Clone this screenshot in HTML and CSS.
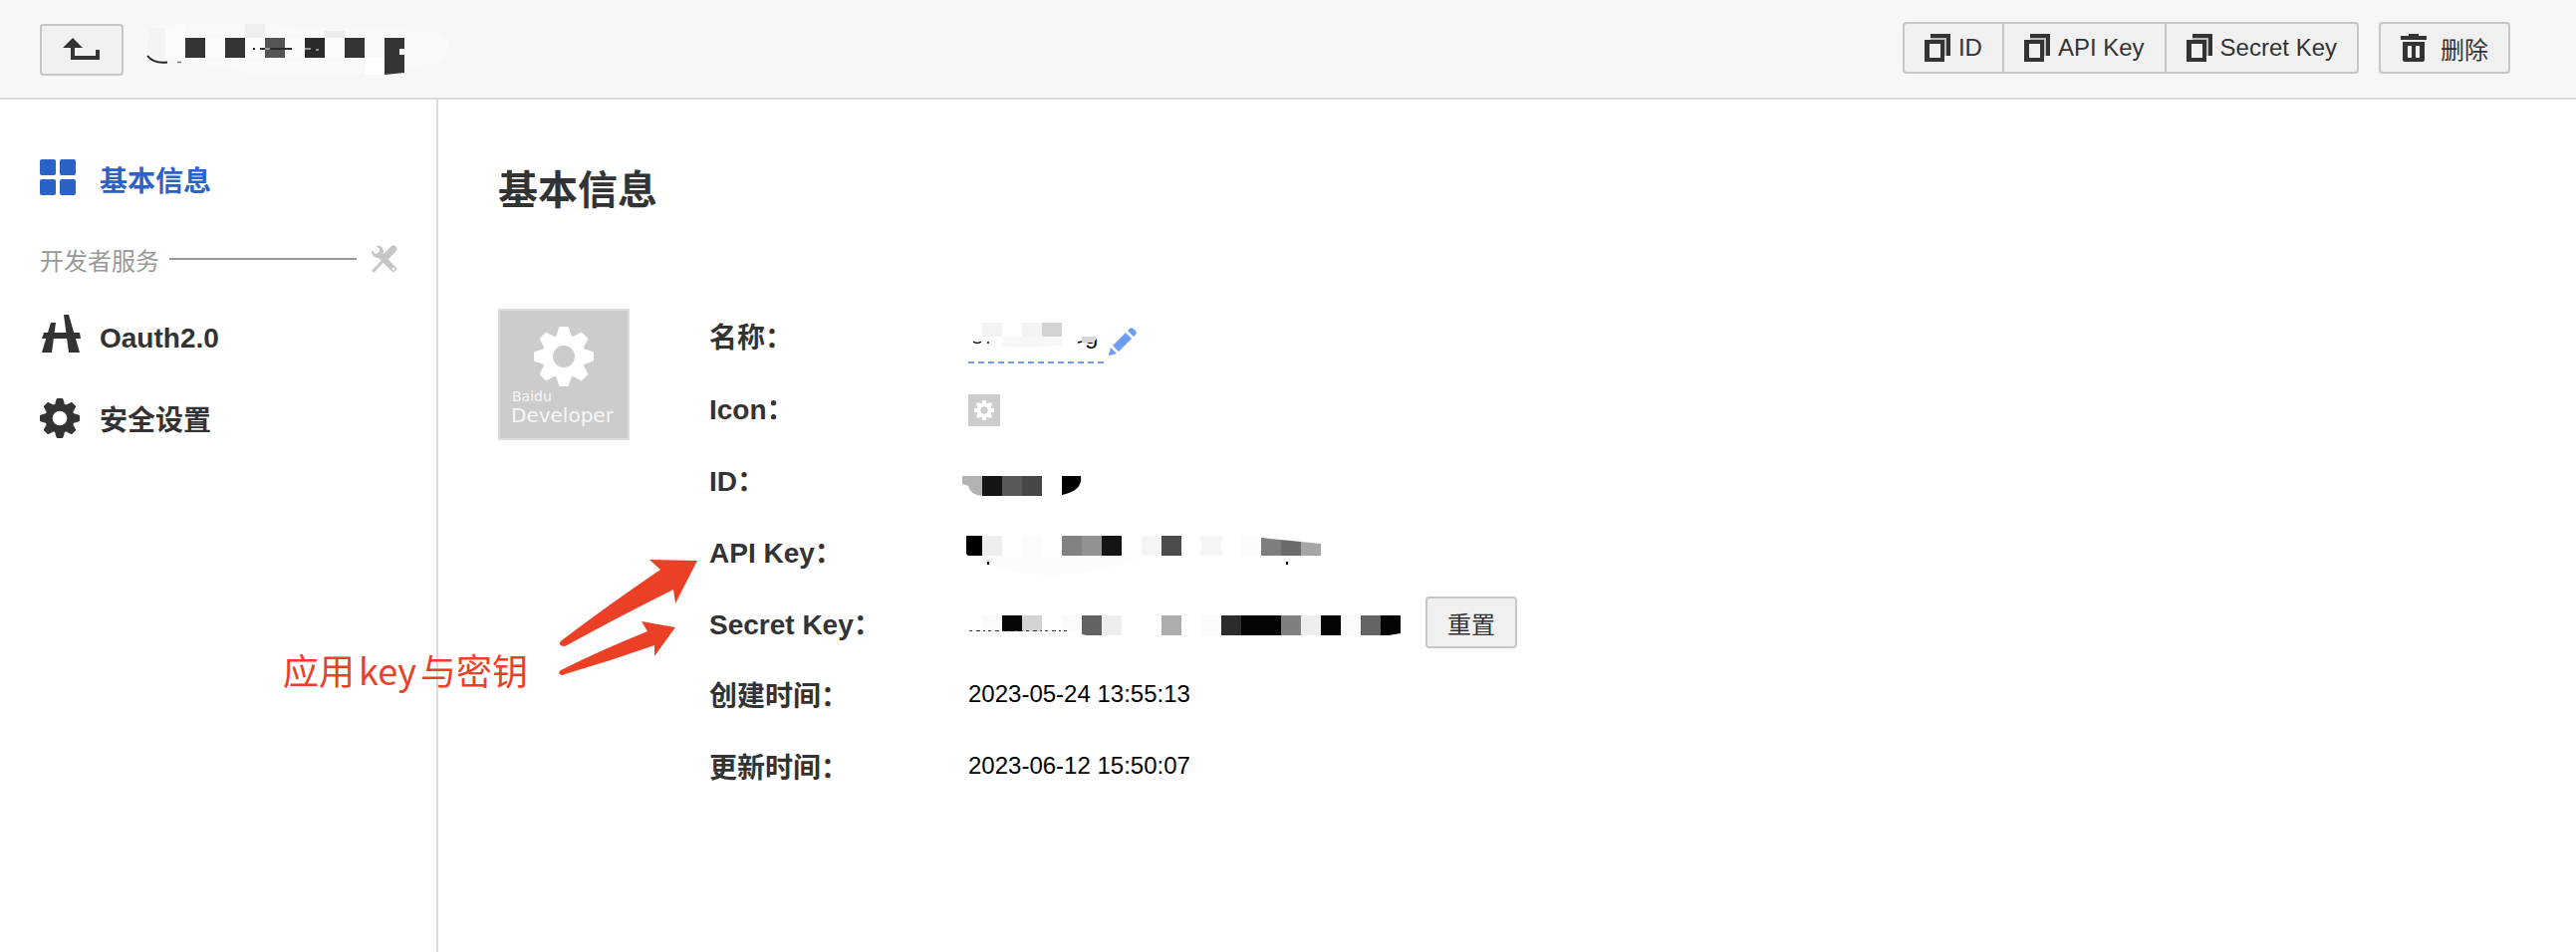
FILE: index.html
```html
<!DOCTYPE html>
<html lang="zh-CN">
<head>
  <meta charset="UTF-8">
  <title>基本信息</title>
  <meta name="viewport" content="width=device-width, initial-scale=1.0">
  <link rel="stylesheet" href="styles.css">
</head>
<body>

  <svg class="sprite" aria-hidden="true">
    <defs>
      <path id="tooth" d="M-8 -19 L-5 -29 Q-4.500 -30 -3.500 -30 H3.500 Q4.500 -30 5 -29 L8 -19 Z"/>
      <symbol id="gear" viewBox="-30 -30 60 60">
        <circle r="16.500" fill="none" stroke="currentColor" stroke-width="11"/>
        <g fill="currentColor">
          <use href="#tooth"/>
          <use href="#tooth" transform="rotate(45)"/>
          <use href="#tooth" transform="rotate(90)"/>
          <use href="#tooth" transform="rotate(135)"/>
          <use href="#tooth" transform="rotate(180)"/>
          <use href="#tooth" transform="rotate(225)"/>
          <use href="#tooth" transform="rotate(270)"/>
          <use href="#tooth" transform="rotate(315)"/>
        </g>
      </symbol>
      <symbol id="copy" viewBox="0 0 28 28">
        <path d="M6 4h16v18h-2V6H6z" fill="#bbb"/>
        <path d="M6 0h20v22h-4V4H6z" fill="#333"/>
        <path d="M0 6h20v22H0zM5 10v14h11V10z" fill="#333" fill-rule="evenodd"/>
      </symbol>
    </defs>
  </svg>

  <header class="header">
    <div class="header-left">
      <button class="btn back" type="button" aria-label="返回">
        <svg width="40" height="24" viewBox="0 0 40 24">
          <path d="M11 0 L21 10 H13 V18 H34 V12 H38 V22 H9 V10 H1 Z" fill="#333"/>
        </svg>
      </button>
      <!-- masked app name -->
      <svg class="mask" width="320" height="60" viewBox="140 20 320 60">
        <path d="M150 28 Q160 22 250 24 L440 32 Q460 45 440 62 L400 72 Q300 80 250 74 Q200 60 150 58 Q142 42 150 28z" fill="#f9f9f9"/>
        <path d="M150 28h16v32q-18-2-19-12z" fill="#f4f4f4"/>
        <path d="M166 25h20v34h-20z" fill="#fbfbfb"/>
        <path d="M246 24h20v14h-20z" fill="#efefef"/>
        <path d="M326 31h20v7h-20z" fill="#ebebeb"/>
        <path d="M206 38h20v20h-20zM246 38h20v20h-20zM286 38h20v20h-20zM326 38h20v20h-20z" fill="#fcfcfc"/>
        <path d="M366 58h20v17h-20z" fill="#fff"/>
        <path d="M186 38h20v20h-20zM226 38h20v20h-20zM346 38h20v20h-20zM386 38h20v11h-5v6h5v18l-20 2z" fill="#343434"/>
        <path d="M266 38h20v20h-20z" fill="#555"/>
        <path d="M306 38h20v20h-20z" fill="#2c2a2a"/>
        <path d="M254 49h2M261 49h32" stroke="#2c2c2c" stroke-width="2"/>
        <path d="M266 49h5M306 49h6M317 50h3" stroke="#fff" stroke-width="1"/>
        <path d="M148 56 Q154 64 168 62.500" fill="none" stroke="#222" stroke-width="2"/>
        <path d="M178 62.500h4" stroke="#777" stroke-width="1.500"/>
      </svg>
    </div>
    <div class="header-right">
      <div class="btn-group">
        <button class="btn" type="button"><svg width="28" height="28"><use href="#copy"/></svg>ID</button>
        <button class="btn" type="button"><svg width="28" height="28"><use href="#copy"/></svg>API Key</button>
        <button class="btn" type="button"><svg width="28" height="28"><use href="#copy"/></svg>Secret Key</button>
      </div>
      <button class="btn btn-delete" type="button">
        <svg width="28" height="28" viewBox="0 0 28 28">
          <path d="M0 2h8V0h10v2h8v4H0z" fill="#333"/>
          <path d="M2 8h22v18q0 2-2 2H4q-2 0-2-2zM7 12v12h4V12zM15 12v12h4V12z" fill="#333" fill-rule="evenodd"/>
        </svg>删除
      </button>
    </div>
  </header>

  <div class="layout">
    <nav class="sidebar">
      <a class="nav-item active" href="#">
        <svg width="40" height="40" viewBox="0 0 40 40" fill="currentColor">
          <rect x="0" y="0" width="16" height="16" rx="2"/>
          <rect x="20" y="0" width="16" height="16" rx="2"/>
          <rect x="0" y="20" width="16" height="16" rx="2"/>
          <rect x="20" y="20" width="16" height="16" rx="2"/>
        </svg>
        基本信息
      </a>
      <div class="nav-group">
        <span>开发者服务</span>
        <i class="rule"></i>
        <svg width="28" height="28" viewBox="0 0 28 28">
          <path d="M3 26 L18 10" stroke="#c6c6c6" stroke-width="3" stroke-linecap="round"/>
          <path d="M16 11 L23 4" stroke="#c6c6c6" stroke-width="7" stroke-linecap="round"/>
          <path d="M9 10 L23 24" stroke="#c6c6c6" stroke-width="6" stroke-linecap="round"/>
          <path d="M1 5 L5 9 L9 8 L9 4 L6 1 Q12 0 13 6 Q13 12 8 13 Q1 13 1 5z" fill="#c6c6c6"/>
          <circle cx="23" cy="24" r="1.500" fill="#fff"/>
        </svg>
      </div>
      <a class="nav-item" href="#">
        <svg width="40" height="40" viewBox="0 0 40 40" fill="currentColor">
          <path d="M11 4h5L12 34H2zM24 -4h5L40 34H29z"/>
          <path d="M4 14h36l1 6H2z"/>
        </svg>
        Oauth2.0
      </a>
      <a class="nav-item" href="#">
        <svg width="40" height="40"><use href="#gear"/></svg>
        安全设置
      </a>
    </nav>

    <main class="main">
      <h1>基本信息</h1>
      <div class="profile">
        <svg class="avatar" width="132" height="132" viewBox="0 0 132 132">
          <rect x="1" y="1" width="130" height="130" fill="#ccc" stroke="#dbdbdb" stroke-width="2"/>
          <use href="#gear" x="36" y="18" width="60" height="60" color="#fff"/>
          <text class="avatar-small" x="14" y="93">Baidu</text>
          <text class="avatar-large" x="13" y="114">Developer</text>
        </svg>

        <dl class="info">
          <dt>名称：</dt>
          <dd>
            <div class="name-field">
              <!-- masked name, only its lower edge shows -->
              <svg class="mask" width="140" height="56" viewBox="972 309 140 56">
                <path d="M986 324h20v14h-20zM1026 324h20v14h-20z" fill="#f3f3f3"/>
                <path d="M1046 324h20v14h-20z" fill="#d3d3d3"/>
                <path d="M1006 338h60v8q-20 4-60 2z" fill="#f7f7f7"/>
                <text class="mask-text" x="1089" y="345">g</text>
                <path d="M1086 326h16v12l-4 6h-12z" fill="#fff"/>
                <path d="M1086 338h15l-4 6h-11z" fill="#d6d6d6"/>
                <path d="M977 343q4 3 8 0M991 344h2M1082 344l4-1" fill="none" stroke="#000" stroke-width="1.500"/>
              </svg>
            </div>
            <button class="edit" type="button" aria-label="编辑">
              <svg width="30" height="28" viewBox="0 0 30 28">
                <path d="M18 5l6 6L11 24l-6-6zM20 3l2-2q2-2 5 1t1 5l-2 2zM3 20l6 6-7 2q-1 0-1-1z" fill="#6f9bf0"/>
              </svg>
            </button>
          </dd>

          <dt>Icon：</dt>
          <dd>
            <svg class="thumb" width="32" height="32" viewBox="0 0 32 32">
              <rect width="32" height="32" fill="#ccc"/>
              <use href="#gear" x="6" y="6" width="20" height="20" color="#fff"/>
            </svg>
          </dd>

          <dt>ID：</dt>
          <dd>
            <svg class="mask" width="128" height="72" viewBox="972 445 128 72">
              <path d="M966 478h20v20q-12-1-14-10l-6-2z" fill="#b3b3b3"/>
              <path d="M986 478h20v20h-20z" fill="#151515"/>
              <path d="M1006 478h20v20h-20z" fill="#595959"/>
              <path d="M1026 478h20v20h-20z" fill="#474747"/>
              <path d="M1066 478h19q2 15-19 19z" fill="#000"/>
            </svg>
          </dd>

          <dt>API Key：</dt>
          <dd>
            <svg class="mask" width="360" height="72" viewBox="972 517 360 72">
              <path d="M986 558h160q-30 18-90 19-50 0-70-15z" fill="#fcfcfc"/>
              <path d="M970 538h16v20h-14l-2-2z" fill="#000"/>
              <path d="M986 538h20v20h-20z" fill="#eee"/>
              <path d="M1026 538h20v20h-20zM1246 538h20v20h-20z" fill="#fcfcfc"/>
              <path d="M1066 538h20v20h-20z" fill="#818181"/>
              <path d="M1086 538h20v20h-20z" fill="#929292"/>
              <path d="M1106 538h20v20h-20z" fill="#141414"/>
              <path d="M1146 538h20v20h-20zM1206 538h20v20h-20z" fill="#f5f5f5"/>
              <path d="M1166 538h20v20h-20z" fill="#4c4c4c"/>
              <path d="M1266 540l20 2v16h-20z" fill="#7e7e7e"/>
              <path d="M1286 542l20 2v14h-20z" fill="#6b6b6b"/>
              <path d="M1306 544l20 2v12h-20z" fill="#a6a6a6"/>
              <path d="M991 564h2v3h-2zM1291 564h2v3h-2z" fill="#000"/>
            </svg>
          </dd>

          <dt>Secret Key：</dt>
          <dd>
            <svg class="mask" width="435" height="72" viewBox="972 589 435 72">
              <path d="M986 618h20v15h-20zM1066 618h20v16h-20zM1206 618h20v20h-20zM1346 618h20v20h-20z" fill="#fafafa"/>
              <path d="M1006 618h20v16h-20z" fill="#070707"/>
              <path d="M1026 618h20v16h-20z" fill="#d4d4d4"/>
              <path d="M1086 618h20v20h-15l-5-1z" fill="#636363"/>
              <path d="M1106 618h20v20h-20zM1306 618h20v20h-20z" fill="#ededed"/>
              <path d="M1166 618h20v20h-20z" fill="#adadad"/>
              <path d="M1226 618h20v20h-20z" fill="#2c2c2c"/>
              <path d="M1246 618h40v20h-40zM1326 618h20v20h-20zM1386 618h20v18l-12 2h-8z" fill="#040404"/>
              <path d="M1286 618h20v20h-20z" fill="#7f7f7f"/>
              <path d="M1366 618h20v20h-20z" fill="#646464"/>
              <path d="M973 633.500h101" stroke="#333" stroke-dasharray="3 4 4 3 2 3"/>
            </svg>
            <button class="btn btn-reset" type="button">重置</button>
          </dd>

          <dt>创建时间：</dt>
          <dd>2023-05-24 13:55:13</dd>

          <dt>更新时间：</dt>
          <dd>2023-06-12 15:50:07</dd>
        </dl>
      </div>
    </main>

    <!-- red note over the page -->
    <p class="note">应用<span>key</span>与密钥</p>
    <svg class="arrows" width="142" height="122" viewBox="560 560 142 122">
      <path d="M700 563 L652 562 L663 572 Q610 608 564 643 Q560 646 563 648 Q566 650 569 648 Q620 620 676 592 L678 606 Z"/>
      <path d="M678 630 L644 624 L650 634 Q605 652 563 673 Q560 675 562 677 Q564 679 567 677 Q612 664 657 648 L657 659 Z"/>
    </svg>
  </div>

</body>
</html>
```
FILE: styles.css
```css
* { box-sizing: border-box; margin: 0; padding: 0; }
body {
  background-color: #fff;
  font-family: "Liberation Sans", "Noto Sans CJK SC", sans-serif;
  font-size: 24px;
  color: #333;
  min-height: 100vh;
  display: flex;
  flex-direction: column;
}
svg { display: block; flex: none; overflow: visible; }
.sprite { position: absolute; width: 0; height: 0; }

/* header */
.header {
  display: flex;
  justify-content: space-between;
  height: 100px;
  padding: 0 66px 0 40px;
  background: #f7f7f7;
  border-bottom: 2px solid #dbdbdb;
}
.header-left {
  display: flex;
  align-items: center;
  gap: 16px;
  padding-top: 2px;
}
.header-right {
  display: flex;
  align-items: center;
  gap: 20px;
  padding-bottom: 2px;
}
.btn {
  display: flex;
  align-items: center;
  justify-content: center;
  gap: 6px;
  height: 52px;
  padding: 0 20px;
  border: 2px solid #c6c6c6;
  border-radius: 4px;
  background: #f0f0f0;
  font-family: inherit;
  font-size: 24px;
  color: #333;
  white-space: nowrap;
  cursor: pointer;
}
.btn:hover { background: #e8e8e8; }
.back { width: 84px; }
.btn-delete { gap: 12px; }
.btn-group { display: flex; }
.btn-group .btn { border-radius: 0; }
.btn-group .btn + .btn { margin-left: -2px; }
.btn-group .btn:first-child { border-radius: 4px 0 0 4px; }
.btn-group .btn:last-child { border-radius: 0 4px 4px 0; }

.layout { position: relative; flex: 1; display: flex; }

/* sidebar */
.sidebar {
  flex: none;
  width: 440px;
  padding: 40px 38px 0 40px;
  border-right: 2px solid #dbdbdb;
}
.nav-item {
  display: flex;
  align-items: center;
  gap: 20px;
  height: 80px;
  font-size: 28px;
  font-weight: bold;
  color: #333;
  text-decoration: none;
}
.nav-item.active { color: #2a63c5; }
.nav-group {
  display: flex;
  align-items: center;
  height: 80px;
  color: #999;
}
.rule {
  flex: 1;
  height: 2px;
  margin: 0 14px 0 10px;
  background: #999;
}

/* content */
.main { flex: 1; padding: 61px 60px; }
h1 {
  font-size: 40px;
  line-height: 60px;
  margin-bottom: 80px;
}
.profile { display: flex; gap: 80px; }
.avatar { margin-top: 9px; }
.avatar text { font-family: "DejaVu Sans", sans-serif; fill: #f6f6f6; }
.avatar-small { font-size: 14px; }
.avatar-large { font-size: 20px; }
.info {
  display: grid;
  grid-template-columns: 260px auto;
  grid-auto-rows: 72px;
  align-items: center;
}
dt { font-size: 28px; font-weight: bold; }
dd { display: flex; align-items: center; color: #000; }
.name-field {
  background: repeating-linear-gradient(90deg, #6f9bea 0 6px, #fff 6px 10px) bottom / 100% 2px no-repeat;
}
.mask-text { font-size: 24px; }
.edit {
  align-self: flex-end;
  margin-bottom: 8px;
  border: none;
  background: none;
  cursor: pointer;
}
.thumb { margin-top: 6px; }
.btn-reset { margin-left: 24px; }

/* note */
.note {
  position: absolute;
  left: 284px;
  top: 550px;
  font-size: 36px;
  line-height: 44px;
  font-family: "Noto Sans CJK SC", sans-serif;
  color: #e8402a;
  white-space: nowrap;
}
.note span { margin: 0 4px; }
.arrows {
  position: absolute;
  left: 560px;
  top: 460px;
  fill: #eb4026;
}
```
